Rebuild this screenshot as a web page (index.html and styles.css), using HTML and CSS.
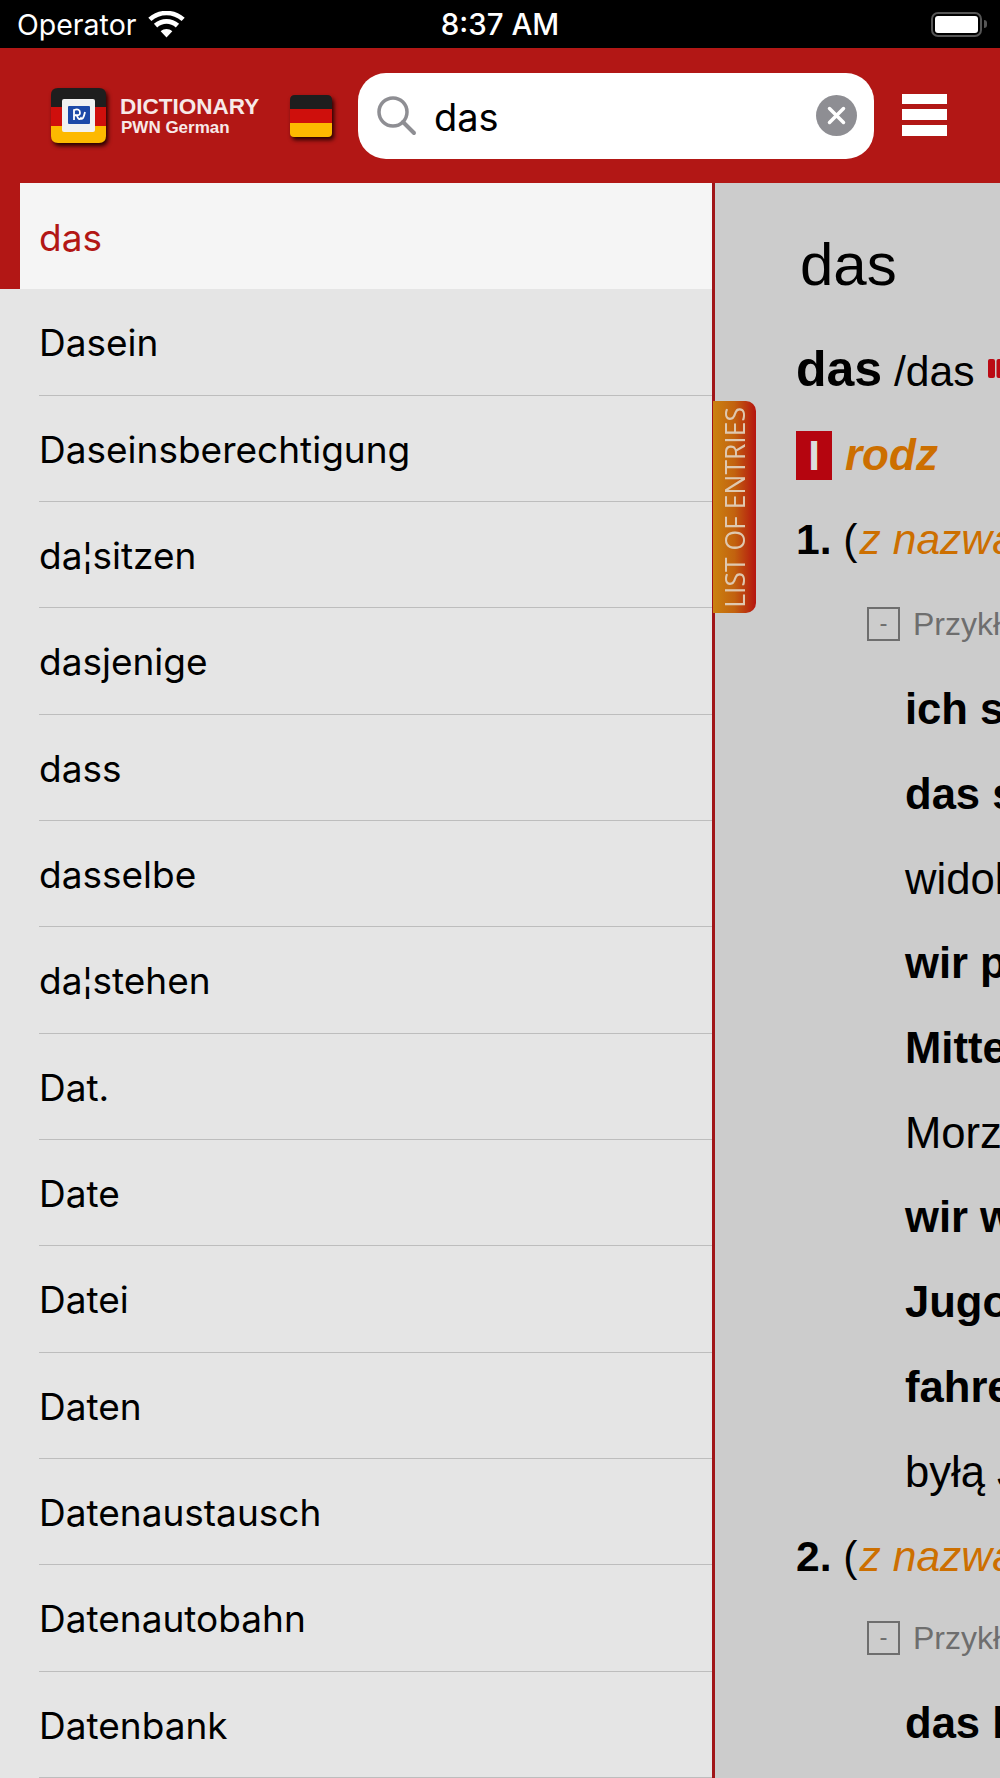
FILE: index.html
```html
<!DOCTYPE html>
<html lang="en">
<head>
  <meta charset="UTF-8">
  <meta name="viewport" content="width=device-width, initial-scale=1.0">
  <title>Dictionary PWN German</title>
  <link rel="stylesheet" href="styles.css">
</head>
<body>
  <div class="status-bar">
    <div class="status-left">
      <span>Operator</span>
      <svg class="wifi" viewBox="0 0 37 27" width="37" height="27">
        <path d="M18.500 26.500 L12.700 20.200 C16 17.200 21 17.200 24.300 20.200 Z" fill="#fff"/>
        <path d="M9.200 16.400 L5.900 12.800 C13 6.300 24 6.300 31.100 12.800 L27.800 16.400 C22.500 11.600 14.500 11.600 9.200 16.400 Z" fill="#fff"/>
        <path d="M3.400 10.100 L0.300 6.700 C10.600 -2.600 26.400 -2.600 36.700 6.700 L33.600 10.100 C25 2.400 12 2.400 3.400 10.100 Z" fill="#fff"/>
      </svg>
    </div>
    <div class="status-time">8:37 AM</div>
    <div class="status-right">
      <div class="battery"><div class="battery-fill"></div></div>
      <div class="battery-cap"></div>
    </div>
  </div>

  <div class="header">
    <svg class="app-icon" viewBox="0 0 55 55" width="55" height="55">
      <path d="M0 7 Q0 0 7 0 H48 Q55 0 55 7 V19 H0 Z" fill="#1e1e1e"/>
      <rect x="0" y="19" width="55" height="19" fill="#cf0f0c"/>
      <path d="M0 38 H55 V48 Q55 55 48 55 H7 Q0 55 0 48 Z" fill="#fdb900"/>
      <rect x="11" y="11" width="33" height="33" rx="2" fill="#f1f1f1"/>
      <rect x="17" y="18" width="22" height="18" rx="1" fill="#1c49a8"/>
      <path d="M23 32 V22 Q29 20 29 25 Q29 28 24 27 M26 28 Q28 33 30 30 Q32 33 34 24" fill="none" stroke="#fff" stroke-width="1.800"/>
    </svg>
    <div class="brand">
      <div class="brand-title">DICTIONARY</div>
      <div class="brand-sub">PWN German</div>
    </div>
    <svg class="flag" viewBox="0 0 42 42" width="42" height="42">
      <path d="M0 5 Q0 0 5 0 H37 Q42 0 42 5 V14 H0 Z" fill="#1e1e1e"/>
      <rect x="0" y="14" width="42" height="14" fill="#cf0f0c"/>
      <path d="M0 28 H42 V38 Q42 42 38 42 H4 Q0 42 0 38 Z" fill="#fdb900"/>
    </svg>
    <div class="search">
      <svg class="search-icon" viewBox="0 0 40 40" width="40" height="40">
        <circle cx="16" cy="16" r="14" fill="none" stroke="#8e8e93" stroke-width="3.500"/>
        <path d="M26 26 L37 37" stroke="#8e8e93" stroke-width="4" stroke-linecap="round"/>
      </svg>
      <span class="search-text">das</span>
      <svg class="search-clear" viewBox="0 0 41 41" width="41" height="41">
        <circle cx="20.500" cy="20.500" r="20.500" fill="#8e8e93"/>
        <path d="M13.500 13.500 L27.500 27.500 M27.500 13.500 L13.500 27.500" stroke="#fff" stroke-width="3.500" stroke-linecap="round"/>
      </svg>
    </div>
    <div class="menu-btn">
      <div class="menu-bar"></div>
      <div class="menu-bar"></div>
      <div class="menu-bar"></div>
    </div>
  </div>

  <div class="main">
    <div class="entries">
      <div class="selected-wrap"><div class="selected-row">das</div></div>
      <div class="row"><div class="row-inner">Dasein</div></div>
      <div class="row"><div class="row-inner">Daseinsberechtigung</div></div>
      <div class="row"><div class="row-inner">da¦sitzen</div></div>
      <div class="row"><div class="row-inner">dasjenige</div></div>
      <div class="row"><div class="row-inner">dass</div></div>
      <div class="row"><div class="row-inner">dasselbe</div></div>
      <div class="row"><div class="row-inner">da¦stehen</div></div>
      <div class="row"><div class="row-inner">Dat.</div></div>
      <div class="row"><div class="row-inner">Date</div></div>
      <div class="row"><div class="row-inner">Datei</div></div>
      <div class="row"><div class="row-inner">Daten</div></div>
      <div class="row"><div class="row-inner">Datenaustausch</div></div>
      <div class="row"><div class="row-inner">Datenautobahn</div></div>
      <div class="row"><div class="row-inner">Datenbank</div></div>
    </div>

    <div class="entry">
      <div class="entry-title">das</div>
      <div class="headword"><b>das</b> <span class="phon">/das</span>
        <svg class="audio" viewBox="0 0 20 19" width="20" height="19">
          <rect x="0" y="0" width="7" height="19" rx="2" fill="#bb0a14"/>
          <rect x="8.500" y="0" width="7" height="19" rx="2" fill="#bb0a14"/>
        </svg>
      </div>
      <div class="pos"><span class="roman">I</span> <span class="pos-name">rodz</span></div>
      <div class="sense"><b>1.</b> (<i>z nazwa</i></div>
      <div class="examples"><span class="toggle">-</span> Przykł</div>
      <div class="ex"><b>ich s</b></div>
      <div class="ex"><b>das s</b></div>
      <div class="ex">widok</div>
      <div class="ex"><b>wir p</b></div>
      <div class="ex"><b>Mitte</b></div>
      <div class="ex">Morz</div>
      <div class="ex"><b>wir w</b></div>
      <div class="ex"><b>Jugo</b></div>
      <div class="ex"><b>fahre</b></div>
      <div class="ex">byłą J</div>
      <div class="sense sense-2"><b>2.</b> (<i>z nazwa</i></div>
      <div class="examples examples-2"><span class="toggle">-</span> Przykł</div>
      <div class="ex"><b>das l</b></div>
    </div>

    <div class="list-tab"><span>LIST OF ENTRIES</span></div>
  </div>
</body>
</html>
```

FILE: styles.css
```css
body {
  margin: 0;
  width: 1000px;
  height: 1778px;
  overflow: hidden;
  font-family: "Liberation Sans", Arial, sans-serif;
  background: #ccc;
}
.status-bar {
  height: 48px;
  background: #000;
  color: #fff;
  display: flex;
  align-items: center;
  justify-content: space-between;
  padding: 0 13px 0 17px;
  position: relative;
  font-family: Inter, sans-serif;
  font-size: 28.500px;
}
.status-left {
  display: flex;
  align-items: center;
  gap: 12px;
}
.status-time {
  position: absolute;
  left: 0;
  right: 0;
  text-align: center;
  font-weight: 500;
  font-size: 29.500px;
}
.status-right {
  display: flex;
  align-items: center;
  gap: 2px;
}
.battery {
  width: 43px;
  height: 17px;
  border: 2px solid #555;
  border-radius: 7px;
  padding: 2px;
}
.battery-fill {
  height: 100%;
  background: #fff;
  border-radius: 3px;
}
.battery-cap {
  width: 3px;
  height: 8px;
  background: #555;
  border-radius: 0 3px 3px 0;
}
.header {
  height: 135.330px;
  background: #b21715;
  display: flex;
  align-items: center;
  padding-left: 51px;
}
.app-icon {
  flex: none;
  filter: drop-shadow(2px 3px 2px rgba(30, 0, 0, 0.95));
}
.brand {
  color: #f7e9e8;
  font-weight: bold;
  margin: -2px 0 0 14px;
  width: 170px;
}
.brand-title {
  font-size: 22.500px;
  line-height: 25px;
}
.brand-sub {
  font-size: 17px;
  line-height: 17px;
  margin-left: 1px;
}
.flag {
  flex: none;
  filter: drop-shadow(2px 3px 2px rgba(30, 0, 0, 0.95));
}
.search {
  width: 516px;
  height: 86px;
  margin-left: 26px;
  background: #fff;
  border-radius: 28px;
  display: flex;
  align-items: center;
  padding: 0 17px 0 19px;
  box-sizing: border-box;
}
.search-text {
  font-family: Inter, sans-serif;
  font-size: 38px;
  margin: 2px 0 0 17px;
  color: #000;
  flex: 1;
}
.menu-btn {
  width: 45px;
  margin: -2px 0 0 28px;
  display: flex;
  flex-direction: column;
  gap: 5px;
}
.menu-bar {
  height: 10.670px;
  background: #fff;
}
.main {
  display: flex;
  height: 1595px;
  position: relative;
}
.entries {
  width: 712px;
  flex: none;
  background: #e5e5e5;
  border-right: 3px solid #a01518;
  font-family: Inter, sans-serif;
  font-size: 37px;
  color: #000;
}
.selected-wrap {
  background: #b21715;
  padding-left: 20px;
}
.selected-row {
  height: 106px;
  box-sizing: border-box;
  background: #f5f5f5;
  color: #b21715;
  display: flex;
  align-items: center;
  padding: 2px 0 0 19px;
}
.row {
  padding-left: 39px;
}
.row-inner {
  height: 106.330px;
  box-sizing: border-box;
  border-bottom: 1px solid #bdbdbd;
  display: flex;
  align-items: center;
  padding-top: 2px;
}
.entry {
  flex: 1;
  min-width: 0;
  overflow: hidden;
  white-space: nowrap;
  background: #ccc;
  color: #000;
  font-size: 42.600px;
  padding-left: 81px;
}
.entry-title {
  font-size: 60px;
  line-height: 66px;
  margin: 49px 0 0 4px;
}
.headword {
  line-height: 50px;
  margin-top: 46px;
}
.headword b {
  font-size: 50px;
}
.audio {
  vertical-align: 8px;
  margin-left: 2px;
}
.pos {
  line-height: 52px;
  margin-top: 33px;
  display: flex;
  align-items: center;
}
.roman {
  width: 36px;
  height: 49px;
  background: #b5050f;
  color: #ddd;
  font-weight: bold;
  font-size: 42px;
  text-align: center;
  line-height: 49px;
  margin-right: 13px;
}
.pos-name {
  color: #cc6f00;
  font-weight: bold;
  font-style: italic;
  font-size: 44px;
}
.sense {
  line-height: 50px;
  margin-top: 33px;
}
.sense i {
  color: #cc6f00;
  margin-left: 2px;
}
.examples {
  margin: 40px 0 0 71px;
  font-size: 32px;
  line-height: 40px;
  color: #6e6e6e;
  display: flex;
  align-items: center;
  gap: 13px;
}
.toggle {
  width: 34px;
  height: 34px;
  box-sizing: border-box;
  border: 2px solid #6e6e6e;
  font-size: 24px;
  line-height: 28px;
  text-align: center;
}
.ex {
  margin-left: 109px;
  line-height: 50px;
  margin-top: 34.700px;
  font-size: 43.600px;
}
.examples + .ex {
  margin-top: 40px;
}
.sense-2 {
  margin-top: 34px;
}
.examples-2 {
  margin-top: 37px;
}
.list-tab {
  position: absolute;
  left: 713px;
  top: 218px;
  width: 43px;
  height: 212px;
  box-sizing: border-box;
  border-radius: 0 10px 10px 0;
  background: linear-gradient(to right, #cb8210, #c2620f 50%, #b5140f);
  color: #dfc8b0;
  display: flex;
  align-items: center;
  justify-content: center;
}
.list-tab span {
  writing-mode: vertical-rl;
  transform: rotate(180deg);
  font-family: "Open Sans", sans-serif;
  font-size: 26.500px;
  white-space: nowrap;
}
```
